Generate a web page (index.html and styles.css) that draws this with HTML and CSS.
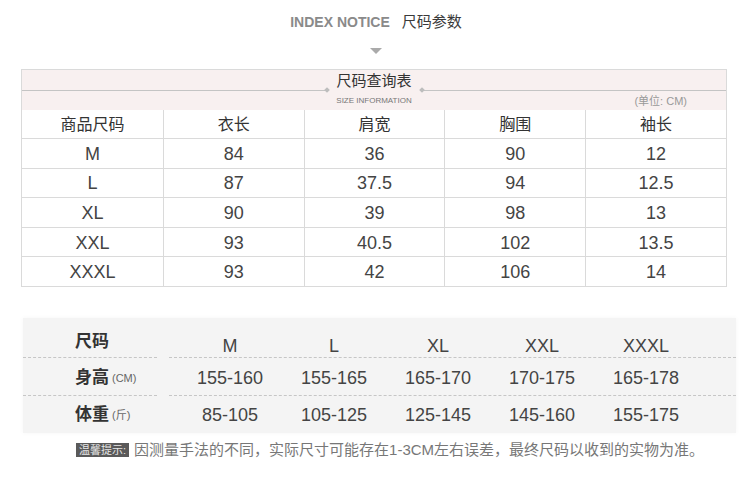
FILE: index.html
```html
<!DOCTYPE html>
<html lang="zh-CN">
<head>
<meta charset="utf-8">
<title>尺码参数</title>
<link rel="stylesheet" href="styles.css">
</head>
<body>
<main class="page">
  <header class="heading">
    <span class="heading-en">INDEX NOTICE</span>
    <span class="heading-cn">尺码参数</span>
  </header>
  <div class="arrow"></div>

  <section class="size-table">
    <div class="band">
      <div class="band-top">
        <span class="band-line"></span>
        <span class="diamond"></span>
        <span class="band-title">尺码查询表</span>
        <span class="diamond"></span>
        <span class="band-line"></span>
      </div>
      <div class="band-bottom">
        <span></span>
        <span class="band-sub">SIZE INFORMATION</span>
        <span class="band-unit">(单位: CM)</span>
      </div>
    </div>
    <div class="grid">
      <div class="cell th">商品尺码</div>
      <div class="cell th">衣长</div>
      <div class="cell th">肩宽</div>
      <div class="cell th">胸围</div>
      <div class="cell th">袖长</div>

      <div class="cell">M</div>
      <div class="cell">84</div>
      <div class="cell">36</div>
      <div class="cell">90</div>
      <div class="cell">12</div>

      <div class="cell">L</div>
      <div class="cell">87</div>
      <div class="cell">37.5</div>
      <div class="cell">94</div>
      <div class="cell">12.5</div>

      <div class="cell">XL</div>
      <div class="cell">90</div>
      <div class="cell">39</div>
      <div class="cell">98</div>
      <div class="cell">13</div>

      <div class="cell">XXL</div>
      <div class="cell">93</div>
      <div class="cell">40.5</div>
      <div class="cell">102</div>
      <div class="cell">13.5</div>

      <div class="cell">XXXL</div>
      <div class="cell">93</div>
      <div class="cell">42</div>
      <div class="cell">106</div>
      <div class="cell">14</div>
    </div>
  </section>

  <section class="ref-panel">
    <div class="ref-row ref-head">
      <div class="ref-label">尺码</div>
      <div class="ref-values">
        <span class="ref-v">M</span>
        <span class="ref-v">L</span>
        <span class="ref-v">XL</span>
        <span class="ref-v">XXL</span>
        <span class="ref-v">XXXL</span>
      </div>
    </div>
    <div class="ref-row ref-mid">
      <div class="ref-label">身高<small>(CM)</small></div>
      <div class="ref-values">
        <span class="ref-v">155-160</span>
        <span class="ref-v">155-165</span>
        <span class="ref-v">165-170</span>
        <span class="ref-v">170-175</span>
        <span class="ref-v">165-178</span>
      </div>
    </div>
    <div class="ref-row ref-last">
      <div class="ref-label">体重<small>(斤)</small></div>
      <div class="ref-values">
        <span class="ref-v">85-105</span>
        <span class="ref-v">105-125</span>
        <span class="ref-v">125-145</span>
        <span class="ref-v">145-160</span>
        <span class="ref-v">155-175</span>
      </div>
    </div>
  </section>

  <p class="note"><span class="note-badge">温馨提示:</span><span class="note-text">因测量手法的不同，实际尺寸可能存在1-3CM左右误差，最终尺码以收到的实物为准。</span></p>
</main>
</body>
</html>
```

FILE: styles.css
```css
* {
  box-sizing: border-box;
}

html, body {
  margin: 0;
  padding: 0;
  background: #ffffff;
}

body {
  font-family: "Liberation Sans", "Noto Sans CJK SC", sans-serif;
  color: #333;
}

.page {
  width: 750px;
  height: 482px;
  padding-top: 12px;
  overflow: hidden;
}

/* heading */
.heading {
  display: flex;
  justify-content: center;
  align-items: center;
  gap: 12px;
  height: 20px;
  line-height: 20px;
  padding-left: 2px;
}

.heading-en {
  font-size: 14px;
  font-weight: 700;
  color: #8a8a8a;
}

.heading-cn {
  font-size: 15px;
  color: #3a3a3a;
}

.arrow {
  width: 0;
  height: 0;
  margin: 16px auto 0;
  border-left: 6px solid transparent;
  border-right: 6px solid transparent;
  border-top: 6px solid #aaaaaa;
  position: relative;
  left: 1px;
}

/* size table */
.size-table {
  margin: 15px 0 0 21px;
  width: 706px;
  border: 1px solid #dadada;
}

.band {
  height: 40px;
  background: #f8f0f0;
}

.band-top {
  display: flex;
  align-items: flex-end;
  height: 22px;
}

.band-line {
  flex: 1;
  height: 1px;
  background: #c4c4c4;
  margin-bottom: 1px;
}

.diamond {
  width: 4px;
  height: 4px;
  background: #bdbdbd;
  transform: rotate(45deg);
  margin: 0 0 0;
}

.band-title {
  font-size: 15px;
  line-height: 22px;
  color: #333;
  margin: 0 8px 0 8px;
}

.band-bottom {
  display: grid;
  grid-template-columns: 1fr auto 1fr;
  align-items: center;
  height: 18px;
}

.band-sub {
  font-size: 8px;
  line-height: 18px;
  color: #777;
}

.band-unit {
  justify-self: end;
  margin-right: 39px;
  font-size: 11px;
  line-height: 18px;
  color: #999;
}

.grid {
  display: grid;
  grid-template-columns: repeat(5, 1fr);
  grid-template-rows: 28px repeat(5, 29.6px);
}

.cell {
  display: flex;
  align-items: center;
  justify-content: center;
  border-top: 1px solid #dadada;
  border-left: 1px solid #dadada;
  font-size: 18px;
  color: #444;
  line-height: 20px;
  padding-top: 1px;
}

.cell:nth-child(5n+1) {
  border-left: none;
}

.cell.th {
  border-top: none;
  font-size: 16px;
  color: #333;
  padding-top: 2px;
}

/* reference panel */
.ref-panel {
  margin: 31px 0 0 23px;
  width: 713px;
  background: #f4f4f4;
  box-shadow: 0 0 5px rgba(0, 0, 0, 0.04);
}

.ref-row {
  display: flex;
}

.ref-head {
  height: 40px;
}

.ref-mid {
  height: 38px;
}

.ref-last {
  height: 37px;
}

.ref-label {
  width: 134px;
  padding-left: 52px;
  display: flex;
  align-items: center;
  font-size: 17px;
  font-weight: 700;
  color: #333;
  line-height: 22px;
}

.ref-label small {
  font-size: 11px;
  font-weight: 400;
  color: #666;
  margin-left: 3px;
}

.ref-values {
  flex: 1;
  margin-left: 12px;
  padding-left: 9px;
  display: flex;
  align-items: center;
}

.ref-v {
  width: 104px;
  text-align: center;
  font-size: 18px;
  color: #444;
  line-height: 22px;
}

.ref-head .ref-label,
.ref-head .ref-values,
.ref-mid .ref-label,
.ref-mid .ref-values {
  border-bottom: 1px dashed #c6c6c6;
}

.ref-head .ref-label {
  padding-top: 9px;
}

.ref-head .ref-values {
  padding-top: 17px;
}

.ref-mid .ref-label,
.ref-mid .ref-values {
  padding-top: 4px;
}

.ref-last .ref-label,
.ref-last .ref-values {
  padding-top: 1px;
}

/* note */
.note {
  display: flex;
  align-items: center;
  margin: 7px 0 0 76px;
  height: 20px;
}

.note-badge {
  display: inline-block;
  height: 14px;
  line-height: 14px;
  padding: 0 3px;
  background: #5a5a5a;
  color: #e8e8e8;
  font-size: 11px;
}

.note-text {
  margin-left: 5px;
  font-size: 15px;
  color: #777;
  line-height: 20px;
}
```
